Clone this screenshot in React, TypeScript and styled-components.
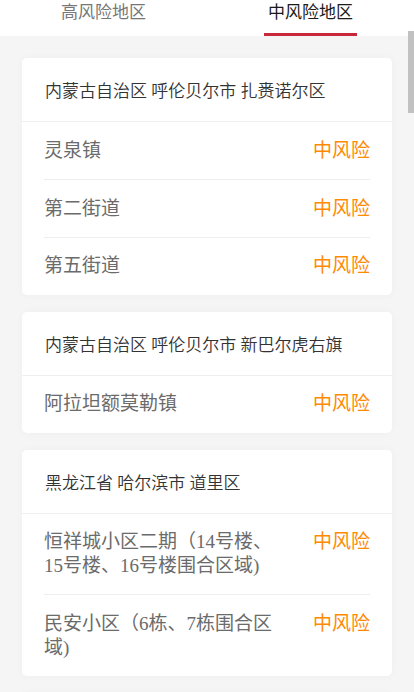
import styled, { createGlobalStyle } from 'styled-components';

interface IArea {
  name: string;
  level: string;
}

interface IRegion {
  title: string;
  areas: IArea[];
}

const mid = '中风险';

const regions: IRegion[] = [
  {
    title: '内蒙古自治区 呼伦贝尔市 扎赉诺尔区',
    areas: [
      { name: '灵泉镇', level: mid },
      { name: '第二街道', level: mid },
      { name: '第五街道', level: mid },
    ],
  },
  {
    title: '内蒙古自治区 呼伦贝尔市 新巴尔虎右旗',
    areas: [{ name: '阿拉坦额莫勒镇', level: mid }],
  },
  {
    title: '黑龙江省 哈尔滨市 道里区',
    areas: [
      { name: '恒祥城小区二期（14号楼、15号楼、16号楼围合区域)', level: mid },
      { name: '民安小区（6栋、7栋围合区域)', level: mid },
    ],
  },
  {
    title: '黑龙江省 哈尔滨市 南岗区',
    areas: [
      { name: '学府路街道', level: mid },
      { name: '和兴路街道', level: mid },
    ],
  },
  {
    title: '黑龙江省 黑河市 爱辉区',
    areas: [
      { name: '花园街道', level: mid },
      { name: '海兰街道', level: mid },
      { name: '兴安街道', level: mid },
    ],
  },
  {
    title: '吉林省 长春市 朝阳区',
    areas: [
      { name: '永昌街道', level: mid },
      { name: '南湖街道', level: mid },
    ],
  },
];

const GlobalStyle = createGlobalStyle`
  html, body {
    margin: 0;
    padding: 0;
    height: 100%;
    background: #f5f5f5;
    font-family: "Liberation Serif", "Noto Sans CJK SC", sans-serif;
  }
  #root {
    height: 100%;
  }
`;

const App = () => {
  return (
    <Page>
      <GlobalStyle />
      <TabBar>
        <Tab>高风险地区</Tab>
        <Tab active>中风险地区</Tab>
      </TabBar>
      <List>
        {regions.map((region, i) => (
          <Card key={i}>
            <CardTitle>{region.title}</CardTitle>
            <Rows>
              {region.areas.map((area, j) => (
                <Row key={j}>
                  <AreaName>{area.name}</AreaName>
                  <Level>{area.level}</Level>
                </Row>
              ))}
            </Rows>
          </Card>
        ))}
      </List>
      <ScrollThumb />
    </Page>
  );
};

const Page = styled.div`
  position: relative;
  height: 100vh;
  display: flex;
  flex-direction: column;
  background: #f5f5f5;
  overflow: hidden;
`;

const TabBar = styled.div`
  flex: none;
  height: 36px;
  display: grid;
  grid-template-columns: 1fr 1fr;
  background: #fff;
`;

const Tab = styled.div<{ active?: boolean }>`
  position: relative;
  display: flex;
  justify-content: center;
  align-items: flex-start;
  font-family: "Noto Sans CJK SC", sans-serif;
  font-size: 17px;
  line-height: 22px;
  color: ${(props) => (props.active ? '#1a1a1a' : '#777')};

  &::after {
    content: '';
    display: ${(props) => (props.active ? 'block' : 'none')};
    position: absolute;
    bottom: 0;
    left: 50%;
    width: 93px;
    height: 3px;
    margin-left: -47px;
    background: #c8283a;
  }
`;

const List = styled.div`
  flex: 1;
  overflow-y: auto;
  padding: 22px 22px 0;
  scrollbar-width: none;

  &::-webkit-scrollbar {
    display: none;
  }
`;

// overlay scroll indicator, as drawn by the mobile browser
const ScrollThumb = styled.div`
  position: absolute;
  top: 31px;
  right: 0;
  width: 6px;
  height: 82px;
  background: #c1c1c1;
`;

const Card = styled.div`
  background: #fff;
  border-radius: 5px;
  box-shadow: 0 0 8px rgba(0, 0, 0, 0.03);
  margin-bottom: 17px;
`;

const CardTitle = styled.div`
  height: 64px;
  display: flex;
  align-items: center;
  padding: 0 23px;
  font-size: 17px;
  font-weight: 350;
  color: #333;
  border-bottom: 1px solid #eeeeee;
  box-sizing: border-box;
`;

const Rows = styled.div`
  padding: 0 22px;
`;

const Row = styled.div`
  display: flex;
  justify-content: space-between;
  align-items: flex-start;
  padding: 16.6px 0;
  font-size: 19px;
  line-height: 1.25;
  border-bottom: 1px solid #eeeeee;

  &:last-child {
    border-bottom: none;
  }
`;

const AreaName = styled.div`
  max-width: 236px;
  color: #6b6b6b;
`;

const Level = styled.div`
  flex: none;
  color: #ff8a00;
`;

export default App;
